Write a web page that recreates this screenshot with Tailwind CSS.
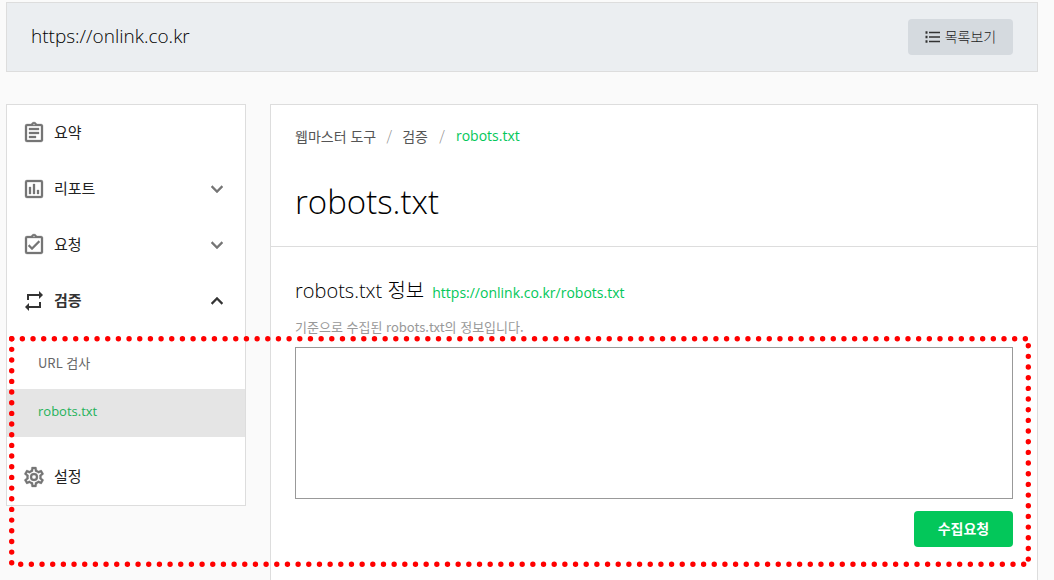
<!DOCTYPE html>
<html lang="ko">
<head>
<meta charset="utf-8">
<meta name="viewport" content="width=device-width, initial-scale=1">
<title>robots.txt</title>
<script src="https://cdn.jsdelivr.net/npm/@tailwindcss/browser@4"></script>
</head>
<body class="bg-[#fafafa] text-[#222] font-['Noto_Sans_CJK_KR',sans-serif]">
<div class="relative flex min-h-screen flex-col pt-0.5 pr-4 pl-1.5">
  <header class="flex h-[70px] items-center justify-between border border-[#ddd] bg-[#ebeef1] px-6">
    <p class="pb-0.5 font-['Open_Sans','Noto_Sans_CJK_KR',sans-serif] text-[19px] font-light text-black">https://onlink.co.kr</p>
    <button type="button" class="flex h-9 w-[105px] items-center justify-center gap-1 rounded bg-[#d5dadf] text-sm font-light">
      <svg class="h-4 w-4" viewBox="0 0 16 16" fill="none" stroke="#333" aria-hidden="true"><path stroke-width="1.400" d="M4 3.500h11M4 8h11M4 12.500h11"/><path stroke-width="2.400" d="M.500 3.500h2M.500 8h2M.500 12.500h2"/></svg>
      <span class="pb-0.5">목록보기</span>
    </button>
  </header>

  <div class="mt-8 flex flex-1 items-stretch gap-6">
    <nav class="w-60 shrink-0 self-start border border-[#ddd] bg-white text-[15px]">
      <a href="#" class="flex h-14 items-center pr-4 pl-[15px]">
        <svg class="mr-2 h-6 w-6" viewBox="0 0 24 24" fill="#757575" stroke="#757575" stroke-width=".3" aria-hidden="true"><path d="M7 15h7v2H7zm0-4h10v2H7zm0-4h10v2H7zm12-4h-4.180C14.400 1.840 13.300 1 12 1c-1.300 0-2.400.840-2.820 2H5a2 2 0 0 0-2 2v14a2 2 0 0 0 2 2h14c1.100 0 2-.900 2-2V5c0-1.100-.900-2-2-2m-7-.250c.410 0 .750.340.750.750s-.340.750-.750.750-.750-.340-.750-.750.340-.750.750-.750M19 19H5V5h14z"/></svg>
        <span class="pb-0.5">요약</span>
      </a>
      <button type="button" class="flex h-14 w-full items-center pr-4 pl-[15px]" aria-expanded="false">
        <svg class="mr-2 h-6 w-6" viewBox="0 0 24 24" fill="#757575" stroke="#757575" stroke-width=".3" aria-hidden="true"><path d="M5 3h14a2 2 0 0 1 2 2v14a2 2 0 0 1-2 2H5a2 2 0 0 1-2-2V5a2 2 0 0 1 2-2m0 2v14h14V5zm2 5h2v7H7zm4-3h2v10h-2zm4 6h2v4h-2z"/></svg>
        <span class="pb-0.5">리포트</span>
        <svg class="ml-auto h-6 w-6" viewBox="0 0 24 24" fill="#757575" stroke="#757575" stroke-width=".4" aria-hidden="true"><path d="M7.410 8.590 12 13.170l4.590-4.580L18 10l-6 6-6-6z"/></svg>
      </button>
      <button type="button" class="flex h-14 w-full items-center pr-4 pl-[15px]" aria-expanded="false">
        <svg class="mr-2 h-6 w-6" viewBox="0 0 24 24" fill="#757575" stroke="#757575" stroke-width=".3" aria-hidden="true"><path d="M18 9l-1.400-1.400L10 14.200l-2.600-2.600L6 13l4 4zm1-6h-4.180C14.400 1.840 13.300 1 12 1c-1.300 0-2.400.840-2.820 2H5a2 2 0 0 0-2 2v14a2 2 0 0 0 2 2h14c1.100 0 2-.900 2-2V5c0-1.100-.900-2-2-2m-7-.250c.410 0 .750.340.750.750s-.340.750-.750.750-.750-.340-.750-.750.340-.750.750-.750M19 19H5V5h14z"/></svg>
        <span class="pb-0.5">요청</span>
        <svg class="ml-auto h-6 w-6" viewBox="0 0 24 24" fill="#757575" stroke="#757575" stroke-width=".4" aria-hidden="true"><path d="M7.410 8.590 12 13.170l4.590-4.580L18 10l-6 6-6-6z"/></svg>
      </button>
      <button type="button" class="flex h-14 w-full items-center pr-4 pl-[15px]" aria-expanded="true">
        <svg class="mr-2 h-6 w-6" viewBox="0 0 24 24" fill="#333" aria-hidden="true"><path d="M5 5h12V2l4 4-4 4V7H7v4H5zm14 14H7v3l-4-4 4-4v3h10v-4h2z"/></svg>
        <span class="pb-0.5 font-bold text-[#333]">검증</span>
        <svg class="ml-auto h-6 w-6" viewBox="0 0 24 24" fill="#333" stroke="#333" stroke-width=".4" aria-hidden="true"><path d="m12 8-6 6 1.410 1.410L12 10.830l4.590 4.580L18 14z"/></svg>
      </button>
      <ul class="py-3 text-[13px]">
        <li><a href="#" class="flex h-12 items-center pb-1 pl-[31px] text-[#666]">URL 검사</a></li>
        <li><a href="#" class="flex h-12 items-center bg-[#e5e5e5] pb-0.5 pl-[31px] font-['Open_Sans','Noto_Sans_CJK_KR',sans-serif] font-medium text-[#1fb25a]">robots.txt</a></li>
      </ul>
      <a href="#" class="flex h-14 items-center pr-4 pl-[15px]">
        <svg class="mr-2 h-6 w-6" viewBox="0 0 24 24" fill="#757575" stroke="#757575" stroke-width=".3" aria-hidden="true"><path d="M19.430 12.980c.040-.320.070-.640.070-.980s-.030-.660-.070-.980l2.110-1.650c.190-.150.240-.420.120-.640l-2-3.460a.5.5 0 0 0-.610-.220l-2.490 1c-.520-.400-1.080-.730-1.690-.980l-.380-2.650A.488.488 0 0 0 14 2h-4c-.250 0-.460.180-.490.420l-.380 2.650c-.610.250-1.170.590-1.690.980l-2.490-1a.5.5 0 0 0-.610.220l-2 3.460c-.130.220-.070.490.120.640l2.110 1.650c-.040.320-.070.650-.070.980s.030.660.070.980l-2.110 1.650c-.190.150-.240.420-.120.640l2 3.460c.120.220.390.300.610.220l2.490-1c.520.400 1.080.730 1.690.980l.380 2.650c.030.240.240.420.490.420h4c.250 0 .460-.180.490-.420l.380-2.650c.610-.250 1.170-.590 1.690-.980l2.490 1a.5.5 0 0 0 .610-.220l2-3.460c.120-.220.070-.490-.120-.640zm-1.980-1.710c.040.310.050.520.050.730s-.020.430-.050.730l-.140 1.130.890.700 1.080.840-.700 1.210-1.270-.510-1.040-.420-.900.680c-.430.320-.840.560-1.250.730l-1.060.430-.160 1.130-.200 1.350h-1.400l-.190-1.350-.160-1.130-1.060-.430c-.430-.180-.830-.410-1.230-.710l-.910-.700-1.060.430-1.270.510-.700-1.210 1.080-.840.890-.700-.140-1.130c-.030-.310-.050-.540-.050-.740s.020-.430.050-.730l.140-1.130-.890-.700-1.080-.840.700-1.210 1.270.510 1.040.420.900-.680c.430-.320.840-.560 1.250-.730l1.060-.430.160-1.130.200-1.350h1.390l.190 1.350.160 1.130 1.060.430c.430.180.830.410 1.230.710l.910.700 1.060-.430 1.270-.510.700 1.210-1.070.850-.890.700zM12 8a4 4 0 1 0 0 8 4 4 0 0 0 0-8m0 6a2 2 0 1 1 0-4 2 2 0 0 1 0 4"/></svg>
        <span class="pb-0.5">설정</span>
      </a>
    </nav>

    <main class="min-w-0 flex-1 border border-b-0 border-[#ddd] bg-white">
      <div class="flex h-[142px] flex-col border-b border-[#ddd] px-6 pt-[19px]">
        <nav class="flex h-6 items-center text-sm" aria-label="breadcrumb">
          <a href="#" class="text-[#555]">웹마스터 도구</a>
          <span class="w-[26px] text-center font-light text-[#888]">/</span>
          <a href="#" class="text-[#555]">검증</a>
          <span class="w-7 text-center font-light text-[#888]">/</span>
          <a href="#" class="font-['Open_Sans'] text-[#03c75a]">robots.txt</a>
        </nav>
        <h1 class="mt-[30px] font-['Open_Sans'] text-[33px] leading-12 font-light text-black">robots.txt</h1>
      </div>
      <section class="px-6 pt-7">
        <div class="flex h-8 items-baseline gap-2">
          <h2 class="font-['Open_Sans','Noto_Sans_CJK_KR',sans-serif] text-xl leading-8 font-light text-black">robots.txt 정보</h2>
          <a href="#" class="font-['Open_Sans'] text-sm text-[#03c75a]">https://onlink.co.kr/robots.txt</a>
        </div>
        <label for="robots" class="mt-2.5 block text-[13px] leading-5 text-[#999]">기준으로 수집된 robots.txt의 정보입니다.</label>
        <textarea id="robots" class="mt-2.5 block h-[152px] w-full resize-none border border-[#999] bg-white"></textarea>
        <div class="flex justify-end pt-3 pb-8">
          <button type="button" class="h-9 w-[99px] rounded bg-[#03c75a] pb-0.5 text-sm font-bold text-white">수집요청</button>
        </div>
      </section>
    </main>
  </div>

  <!-- Dotted highlight frame -->
  <svg class="pointer-events-none absolute top-[336px] right-[23px] left-[9px] h-[231px] w-[calc(100%-32px)]" fill="none" stroke="#f00" stroke-width="5.400" stroke-linecap="round" aria-hidden="true">
    <path d="M2.700 2.700V230" stroke-dasharray="0 10.670"/>
    <line x1="2.700" y1="2.700" x2="99.700%" y2="2.700" stroke-dasharray="0 10.670"/>
    <line x1="11.700" y1="228.300" x2="99.700%" y2="228.300" stroke-dasharray="0 10.670"/>
    <line x1="99.740%" y1="9.700" x2="99.740%" y2="224" stroke-dasharray="0 10.670"/>
  </svg>
</div>
</body>
</html>
